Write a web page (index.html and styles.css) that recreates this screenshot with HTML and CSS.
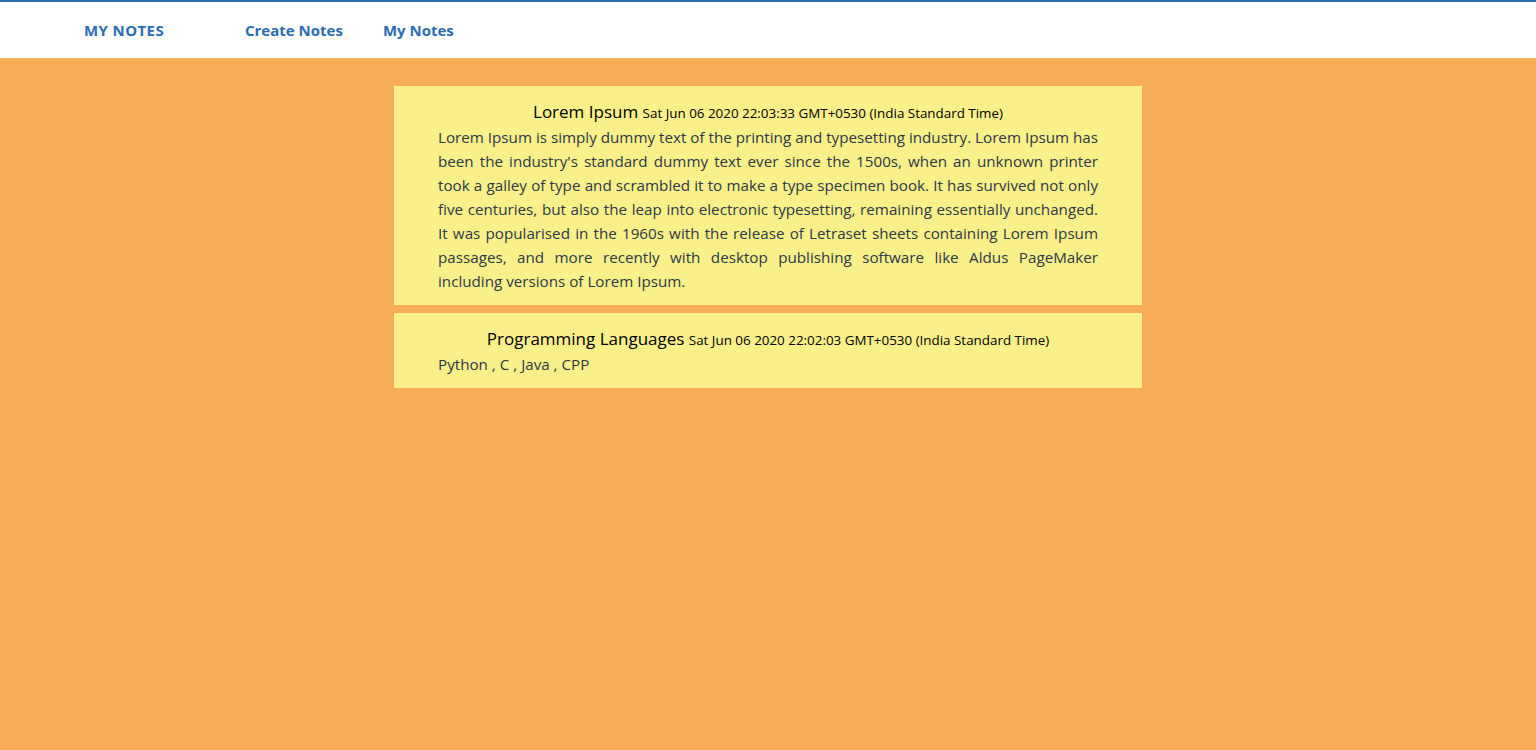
FILE: index.html
```html
<!DOCTYPE html>
<html lang="en">
<head>
<meta charset="utf-8">
<title>My Notes</title>
<link rel="stylesheet" href="styles.css">
</head>
<body>
<header class="navbar">
  <a class="brand" href="#">MY NOTES</a>
  <nav class="links">
    <a href="#">Create Notes</a>
    <a href="#">My Notes</a>
  </nav>
</header>
<main class="notes">
  <article class="note">
    <h2 class="note-title">Lorem Ipsum <span class="note-date">Sat Jun 06 2020 22:03:33 GMT+0530 (India Standard Time)</span></h2>
    <p class="note-body">Lorem Ipsum is simply dummy text of the printing and typesetting industry. Lorem Ipsum has been the industry's standard dummy text ever since the 1500s, when an unknown printer took a galley of type and scrambled it to make a type specimen book. It has survived not only five centuries, but also the leap into electronic typesetting, remaining essentially unchanged. It was popularised in the 1960s with the release of Letraset sheets containing Lorem Ipsum passages, and more recently with desktop publishing software like Aldus PageMaker including versions of Lorem Ipsum.</p>
  </article>
  <article class="note">
    <h2 class="note-title">Programming Languages <span class="note-date">Sat Jun 06 2020 22:02:03 GMT+0530 (India Standard Time)</span></h2>
    <p class="note-body">Python , C , Java , CPP</p>
  </article>
</main>
</body>
</html>
```
FILE: styles.css
```css
html, body {
  margin: 0;
  padding: 0;
}
body {
  background: #f6ad55;
  font-family: "Open Sans", "Noto Sans", sans-serif;
  min-height: 750px;
}
.navbar {
  background: #ffffff;
  border-top: 2px solid #2b6cb0;
  height: 56px;
  display: flex;
  align-items: center;
  padding-left: 84px;
}
.navbar a {
  color: #2b6cb0;
  font-weight: 700;
  font-size: 15px;
  text-decoration: none;
}
.navbar .brand {
  width: 161px;
  letter-spacing: 0.4px;
}
.links {
  display: flex;
  gap: 40px;
}
.notes {
  display: flex;
  flex-direction: column;
  align-items: center;
  gap: 8px;
  padding-top: 28px;
}
.note {
  width: 660px;
  background: #faf089;
  padding: 14px 44px 12px;
}
.note-title {
  margin: 0;
  text-align: center;
  font-weight: 400;
  font-size: 17px;
  line-height: 24px;
  color: #000;
}
.note-date {
  font-size: 13.4px;
}
.note-body {
  margin: 0;
  font-size: 15.2px;
  line-height: 24px;
  color: #2d3748;
  text-align: justify;
}
```
